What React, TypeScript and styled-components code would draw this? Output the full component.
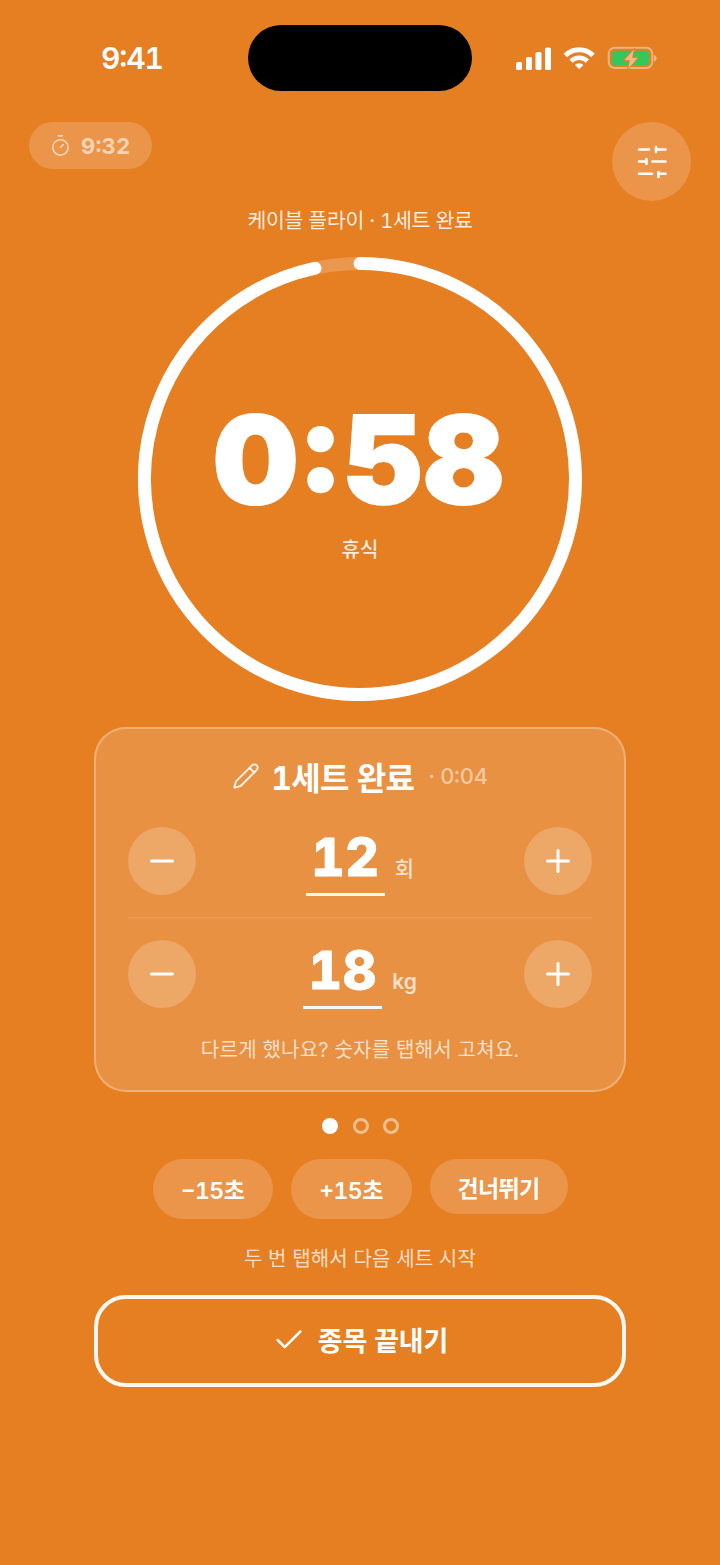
import React from "react";
import styled, { createGlobalStyle } from "styled-components";
import { Timer, Pencil, Minus, Plus, Check } from "lucide-react";

const Global = createGlobalStyle`
  html, body { margin: 0; padding: 0; background: #e67e22; }
  * { box-sizing: border-box; }
  body {
    font-family: Inter, "Noto Sans CJK KR", sans-serif;
    color: #fff;
    font-feature-settings: "tnum", "case";
  }
  button { font-feature-settings: inherit; }
`;

const Page = styled.main`
  position: relative;
  width: 720px;
  height: 1565px;
  overflow: hidden;
  background: #e67e22;
  display: flex;
  flex-direction: column;
  align-items: center;
`;

const StatusBar = styled.header`
  width: 100%;
  height: 122px;
  padding: 46px 63px 0 101px;
  display: flex;
  justify-content: space-between;
  align-items: flex-start;
`;

const Clock = styled.span`
  font-size: 30px;
  font-weight: 600;
  line-height: 24px;
  letter-spacing: -1.1px;
`;

const StatusIcons = styled.svg`
  display: block;
  width: 142px;
  height: 26px;
`;

const Island = styled.div`
  position: absolute;
  left: 248px;
  top: 25px;
  width: 224px;
  height: 66px;
  border-radius: 33px;
  background: #000;
`;

const TopRow = styled.div`
  width: 100%;
  height: 79px;
  padding: 0 29px;
  display: flex;
  justify-content: space-between;
  align-items: flex-start;
`;

const ElapsedPill = styled.div`
  width: 123px;
  height: 47px;
  padding-left: 20px;
  border-radius: 24px;
  background: rgba(255, 255, 255, 0.18);
  display: flex;
  align-items: center;
  gap: 9px;
  color: rgba(255, 255, 255, 0.6);
  font-size: 22px;
  font-weight: 700;
  letter-spacing: 0.2px;
`;

const RoundButton = styled.button`
  width: 79px;
  height: 79px;
  padding: 0;
  border: 0;
  border-radius: 50%;
  background: rgba(255, 255, 255, 0.18);
  display: flex;
  align-items: center;
  justify-content: center;
`;

const Subtitle = styled.div`
  margin-top: 7px;
  height: 26px;
  line-height: 26px;
  font-size: 20.500px;
  font-weight: 400;
  letter-spacing: -0.3px;
  color: rgba(255, 255, 255, 0.88);
`;

const RingWrap = styled.section`
  margin-top: 23px;
  width: 444px;
  height: 444px;
  display: grid;
  justify-items: center;
  > * { grid-area: 1 / 1; }
`;

const RingSvg = styled.svg`
  display: block;
  width: 444px;
  height: 444px;
`;

const RingText = styled.div`
  padding-top: 128px;
  display: flex;
  flex-direction: column;
  align-items: center;
`;

const BigTime = styled.div`
  padding-right: 4px;
  font-size: 122px;
  line-height: 150px;
  font-weight: 900;
  font-optical-sizing: none;
  font-feature-settings: "case";
  letter-spacing: -1.200px;
  -webkit-text-stroke: 2px #fff;
`;

const RestLabel = styled.div`
  margin-top: 2px;
  font-size: 20px;
  line-height: 26px;
  font-weight: 500;
  color: rgba(255, 255, 255, 0.85);
`;

const Card = styled.section`
  margin-top: 26px;
  width: 532px;
  height: 365px;
  padding: 0 32px;
  border: 2px solid rgba(255, 255, 255, 0.28);
  border-radius: 32px;
  background: rgba(255, 255, 255, 0.15);
  display: flex;
  flex-direction: column;
`;

const CardTitle = styled.div`
  height: 98px;
  padding-bottom: 4px;
  display: flex;
  align-items: center;
  justify-content: center;
`;

const TitleIcon = styled.span`
  display: flex;
  margin-right: 11px;
  color: rgba(255, 255, 255, 0.9);
`;

const TitleText = styled.span`
  font-size: 32px;
  font-weight: 700;
  letter-spacing: -0.700px;
`;

const TitleTime = styled.span`
  margin-left: 14px;
  font-size: 22px;
  font-weight: 500;
  letter-spacing: -0.3px;
  color: rgba(255, 255, 255, 0.5);
`;

const StepRow = styled.div`
  height: 68px;
  display: flex;
  align-items: center;
  justify-content: space-between;
`;

const StepButton = styled.button`
  width: 68px;
  height: 68px;
  padding: 0;
  border: 0;
  border-radius: 50%;
  background: rgba(255, 255, 255, 0.2);
  color: #fff;
  display: flex;
  align-items: center;
  justify-content: center;
`;

const ValueGroup = styled.div`
  display: flex;
  align-items: flex-end;
  gap: 10px;
`;

const Value = styled.div`
  width: 79px;
  height: 69px;
  border-bottom: 3px solid rgba(255, 255, 255, 0.92);
  text-align: center;
  font-size: 52px;
  line-height: 62px;
  font-weight: 800;
  font-optical-sizing: none;
  letter-spacing: 0.5px;
  -webkit-text-stroke: 0.800px #fff;
`;

const Unit = styled.span<{ $strong?: boolean }>`
  margin-bottom: 14px;
  font-size: 21px;
  line-height: 26px;
  font-weight: ${(p) => (p.$strong ? 600 : 500)};
  color: rgba(255, 255, 255, 0.72);
`;

const Divider = styled.hr`
  width: 100%;
  margin: 22px 0 22px;
  height: 1px;
  border: 0;
  background: rgba(255, 255, 255, 0.12);
`;

const CardNote = styled.p`
  margin: 28px 0 0;
  text-align: center;
  font-size: 20px;
  line-height: 28px;
  letter-spacing: 0.25px;
  color: rgba(255, 255, 255, 0.72);
`;

const Dots = styled.div`
  margin-top: 26px;
  padding-left: 1px;
  display: flex;
  gap: 14.500px;
`;

const Dot = styled.span<{ $on?: boolean }>`
  width: 16px;
  height: 16px;
  border-radius: 50%;
  background: ${(p) => (p.$on ? "#fff" : "transparent")};
  border: ${(p) => (p.$on ? "0" : "3px solid rgba(255,255,255,0.5)")};
`;

const Actions = styled.div`
  margin-top: 25px;
  display: flex;
  align-items: flex-start;
  gap: 18px;
`;

const ActionButton = styled.button<{ $w: number; $h: number }>`
  width: ${(p) => p.$w}px;
  height: ${(p) => p.$h}px;
  padding: 0;
  border: 0;
  border-radius: 30px;
  background: rgba(255, 255, 255, 0.18);
  color: #fff;
  font-family: inherit;
  font-size: 23px;
  font-weight: 600;
  letter-spacing: -0.6px;
`;

const Hint = styled.div`
  margin-top: 26px;
  height: 28px;
  line-height: 28px;
  font-size: 20px;
  letter-spacing: 0.17px;
  color: rgba(255, 255, 255, 0.75);
`;

const FinishButton = styled.button`
  margin-top: 22px;
  width: 532px;
  height: 92px;
  padding: 0 0 3px;
  border: 4px solid rgba(255, 255, 255, 0.95);
  border-radius: 32px;
  background: transparent;
  color: #fff;
  font-family: inherit;
  font-size: 27px;
  font-weight: 600;
  letter-spacing: -0.2px;
  display: flex;
  align-items: center;
  justify-content: center;
  gap: 12px;
`;

const StatusGlyphs = () => (
  <StatusIcons viewBox="0 0 142 26">
    <g fill="#fff">
      <rect x="1" y="16" width="6" height="8" rx="1.6" />
      <rect x="11" y="11" width="6" height="13" rx="1.6" />
      <rect x="20.500" y="6" width="6" height="18" rx="1.6" />
      <rect x="30" y="1.500" width="6" height="22.500" rx="1.6" />
    </g>
    <g fill="none" stroke="#fff">
      <path d="M50.400 9.500A19.500 19.500 0 0 1 78 9.500" strokeWidth="5" />
      <path d="M56.070 15.170A11.500 11.500 0 0 1 72.330 15.170" strokeWidth="4.500" />
    </g>
    <path d="M59.960 19.060A6 6 0 0 1 68.440 19.060L64.200 23.300z" fill="#fff" />
    <rect x="93.700" y="1.700" width="43.600" height="20.300" rx="6" fill="none" stroke="rgba(255,255,255,.42)" strokeWidth="2" />
    <rect x="96.700" y="4.700" width="37.600" height="14.300" rx="3.500" fill="#34c759" />
    <path d="M139 9c1.800.5 2.700 1.800 2.700 3.300s-.9 2.900-2.700 3.400z" fill="rgba(255,255,255,.42)" />
    <path
      d="M119.700 2L108.300 14.700H114.300L112.300 24.700L123.700 11.300H117.700Z"
      fill="#f4b781"
      stroke="#e67e22"
      strokeWidth="1"
      strokeLinejoin="round"
    />
  </StatusIcons>
);

const SlidersGlyph = () => (
  <svg width="32" height="36" viewBox="0 0 32 36" fill="none" stroke="#fff" strokeWidth="2.600" strokeLinecap="round">
    <path d="M3 5.500h10M20 5.500h9.500M20 3v5" />
    <path d="M3 17.500h7.500M16.500 17.500h13M10.500 15v5" />
    <path d="M3 29.800h13M22.500 29.800h7M22.500 28v5" />
  </svg>
);

export default function App() {
  return (
    <Page>
      <Global />
      <Island />
      <StatusBar>
        <Clock>9:41</Clock>
        <StatusGlyphs />
      </StatusBar>
      <TopRow>
        <ElapsedPill>
          <Timer size={23} strokeWidth={1.7} />
          <span>9:32</span>
        </ElapsedPill>
        <RoundButton aria-label="설정">
          <SlidersGlyph />
        </RoundButton>
      </TopRow>
      <Subtitle>케이블 플라이 · 1세트 완료</Subtitle>
      <RingWrap>
        <RingSvg viewBox="0 0 444 444">
          <circle cx="222" cy="222" r="215.500" fill="none" stroke="rgba(255,255,255,.2)" strokeWidth="13" />
          <path
            d="M222 6.500A215.500 215.500 0 1 1 177 11.250"
            fill="none"
            stroke="#fff"
            strokeWidth="13"
            strokeLinecap="round"
          />
        </RingSvg>
        <RingText>
          <BigTime>0:58</BigTime>
          <RestLabel>휴식</RestLabel>
        </RingText>
      </RingWrap>
      <Card>
        <CardTitle>
          <TitleIcon>
            <Pencil size={28} strokeWidth={1.6} />
          </TitleIcon>
          <TitleText>1세트 완료</TitleText>
          <TitleTime>· 0:04</TitleTime>
        </CardTitle>
        <StepRow>
          <StepButton aria-label="감소">
            <Minus size={36} strokeWidth={2} />
          </StepButton>
          <ValueGroup>
            <Value>12</Value>
            <Unit>회</Unit>
          </ValueGroup>
          <StepButton aria-label="증가">
            <Plus size={36} strokeWidth={2} />
          </StepButton>
        </StepRow>
        <Divider />
        <StepRow>
          <StepButton aria-label="감소">
            <Minus size={36} strokeWidth={2} />
          </StepButton>
          <ValueGroup>
            <Value>18</Value>
            <Unit $strong>kg</Unit>
          </ValueGroup>
          <StepButton aria-label="증가">
            <Plus size={36} strokeWidth={2} />
          </StepButton>
        </StepRow>
        <CardNote>다르게 했나요? 숫자를 탭해서 고쳐요.</CardNote>
      </Card>
      <Dots>
        <Dot $on />
        <Dot />
        <Dot />
      </Dots>
      <Actions>
        <ActionButton $w={120} $h={60}>−15초</ActionButton>
        <ActionButton $w={121} $h={60}>+15초</ActionButton>
        <ActionButton $w={138} $h={55}>건너뛰기</ActionButton>
      </Actions>
      <Hint>두 번 탭해서 다음 세트 시작</Hint>
      <FinishButton>
        <Check size={34} strokeWidth={1.8} />
        <span>종목 끝내기</span>
      </FinishButton>
    </Page>
  );
}
